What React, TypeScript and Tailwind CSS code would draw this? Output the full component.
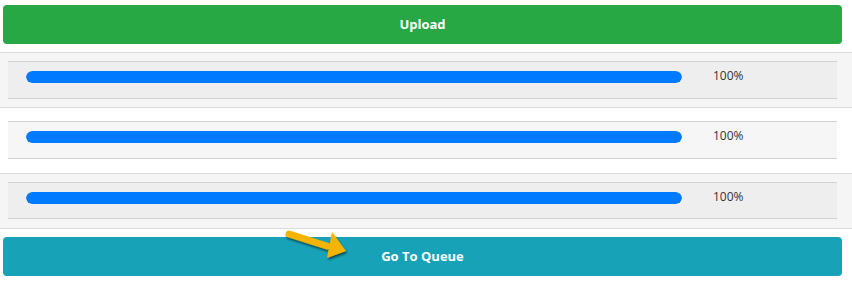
import React from 'react';

interface UploadRow {
  id: number;
  percent: number;
  striped: boolean;
  padding: string;
  height: string;
}

const rows: UploadRow[] = [
  { id: 1, percent: 100, striped: true, padding: 'pt-[8px] pb-[8px]', height: 'h-[38px]' },
  { id: 2, percent: 100, striped: false, padding: 'pt-[13px] pb-[14px]', height: 'h-[38px]' },
  { id: 3, percent: 100, striped: true, padding: 'pt-[8px] pb-[9px]', height: 'h-[37px]' },
];

function Arrow() {
  return (
    <svg width="70" height="34" viewBox="0 0 70 34" className="absolute left-[282px] top-[-8px]">
      <defs>
        <filter id="sh" x="-20%" y="-40%" width="140%" height="180%">
          <feDropShadow dx="1" dy="2" stdDeviation="1.2" floodColor="#000" floodOpacity="0.55" />
        </filter>
      </defs>
      <g filter="url(#sh)">
        <line x1="7" y1="5" x2="45" y2="17" stroke="#f5b400" strokeWidth="7" strokeLinecap="round" />
        <polygon points="50,3 64,22 45,29" fill="#f5b400" />
      </g>
    </svg>
  );
}

export default function App() {
  return (
    <div className="w-[852px] h-[285px] bg-white pt-[5px] font-['Open_Sans',sans-serif]">
      <button className="ml-[3px] w-[839px] h-[39px] rounded-[4px] bg-[#28a745] text-white text-[13px] font-bold">
        Upload
      </button>

      <div className="mt-[8px] border-b border-[#dcdcdc]">
        {rows.map(row => (
          <div
            key={row.id}
            className={`border-t border-[#dcdcdc] ${row.padding} ${row.striped ? 'bg-[#f5f5f5]' : 'bg-white'}`}
          >
            <div
              className={`ml-[8px] w-[829px] ${row.height} border-y border-[#d2d2d2] flex items-start ${row.striped ? 'bg-[#eeeeee]' : 'bg-[#f6f6f6]'}`}
            >
              <div className="ml-[18px] mt-[9px] w-[656px] h-[12px] rounded-full bg-[#e9ecef] overflow-hidden">
                <div className="h-full rounded-full bg-[#007bff]" style={{ width: `${row.percent}%` }} />
              </div>
              <span className="ml-[31px] mt-[6px] text-[12px] leading-[16px] text-[#333]">{row.percent}%</span>
            </div>
          </div>
        ))}
      </div>

      <div className="relative mt-[8px]">
        <button className="ml-[3px] w-[839px] h-[39px] rounded-[4px] bg-[#17a2b8] text-white text-[13px] font-bold">
          Go To Queue
        </button>
        <Arrow />
      </div>
    </div>
  );
}
